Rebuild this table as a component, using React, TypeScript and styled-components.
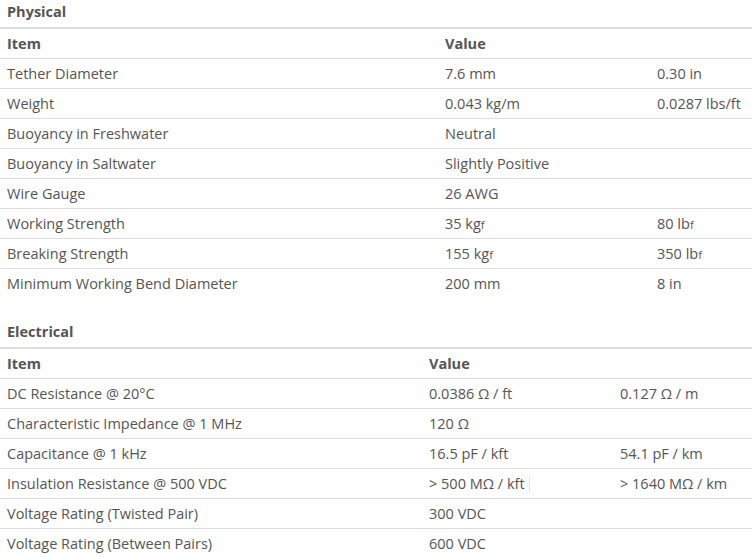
import type { ReactNode } from 'react';
import styled, { createGlobalStyle } from 'styled-components';

const GlobalStyle = createGlobalStyle`
  body {
    margin: 0;
    background: #fff;
    font-family: 'Open Sans', 'Noto Sans', sans-serif;
    color: #555;
  }
`;

type Row = [string, ReactNode, ReactNode?];

const Kgf = () => (
  <>
    kg<Small>f</Small>
  </>
);

const Lbf = () => (
  <>
    lb<Small>f</Small>
  </>
);

const getPhysical = (): Row[] => [
  ['Tether Diameter', '7.6 mm', '0.30 in'],
  ['Weight', '0.043 kg/m', '0.0287 lbs/ft'],
  ['Buoyancy in Freshwater', 'Neutral'],
  ['Buoyancy in Saltwater', 'Slightly Positive'],
  ['Wire Gauge', '26 AWG'],
  ['Working Strength', <>35 <Kgf /></>, <>80 <Lbf /></>],
  ['Breaking Strength', <>155 <Kgf /></>, <>350 <Lbf /></>],
  ['Minimum Working Bend Diameter', '200 mm', '8 in'],
];

const getElectrical = (): Row[] => [
  ['DC Resistance @ 20°C', '0.0386 Ω / ft', '0.127 Ω / m'],
  ['Characteristic Impedance @ 1 MHz', '120 Ω'],
  ['Capacitance @ 1 kHz', '16.5 pF / kft', '54.1 pF / km'],
  ['Insulation Resistance @ 500 VDC', <>&gt; 500 MΩ / kft<Caret /></>, '> 1640 MΩ / km'],
  ['Voltage Rating (Twisted Pair)', '300 VDC'],
  ['Voltage Rating (Between Pairs)', '600 VDC'],
];

const SpecTable = ({ title, rows, cols }: { title: string; rows: Row[]; cols: [number, number] }) => (
  <Section>
    <Heading>{title}</Heading>
    <Table>
      <colgroup>
        <col style={{ width: cols[0] }} />
        <col style={{ width: cols[1] }} />
        <col />
      </colgroup>
      <thead>
        <tr>
          <Th>Item</Th>
          <Th>Value</Th>
          <Th />
        </tr>
      </thead>
      <tbody>
        {rows.map(([item, value, alt], i) => (
          <tr key={i}>
            <Td>{item}</Td>
            <Td>{value}</Td>
            <Td>{alt}</Td>
          </tr>
        ))}
      </tbody>
    </Table>
  </Section>
);

const App = () => (
  <>
    <GlobalStyle />
    <Page>
      <SpecTable title="Physical" rows={getPhysical()} cols={[438, 212]} />
      <SpecTable title="Electrical" rows={getElectrical()} cols={[422, 191]} />
    </Page>
  </>
);

export default App;

const Page = styled.div`
  width: 752px;
  display: flex;
  flex-direction: column;
  gap: 22px;
`;

const Section = styled.div`
  display: flex;
  flex-direction: column;
`;

const Heading = styled.div`
  height: 29px;
  padding: 2px 7px 0;
  box-sizing: border-box;
  font-size: 14.5px;
  font-weight: 700;
  line-height: 20px;
  border-bottom: 2px solid #ddd;
`;

const Table = styled.table`
  width: 100%;
  border-collapse: collapse;
  table-layout: fixed;
  font-size: 14.5px;
`;

const Th = styled.th`
  height: 29px;
  padding: 0 7px;
  text-align: left;
  font-weight: 700;
  border-bottom: 1px solid #ddd;
`;

const Td = styled.td`
  height: 29px;
  padding: 0 7px;
  white-space: nowrap;
  border-bottom: 1px solid #ddd;

  tr:last-child > & {
    border-bottom: none;
  }
`;

const Small = styled.span`
  font-size: 11px;
`;

const Caret = styled.span`
  display: inline-block;
  width: 1px;
  height: 17px;
  margin-left: 4px;
  vertical-align: middle;
  background: #dde6ee;
`;
